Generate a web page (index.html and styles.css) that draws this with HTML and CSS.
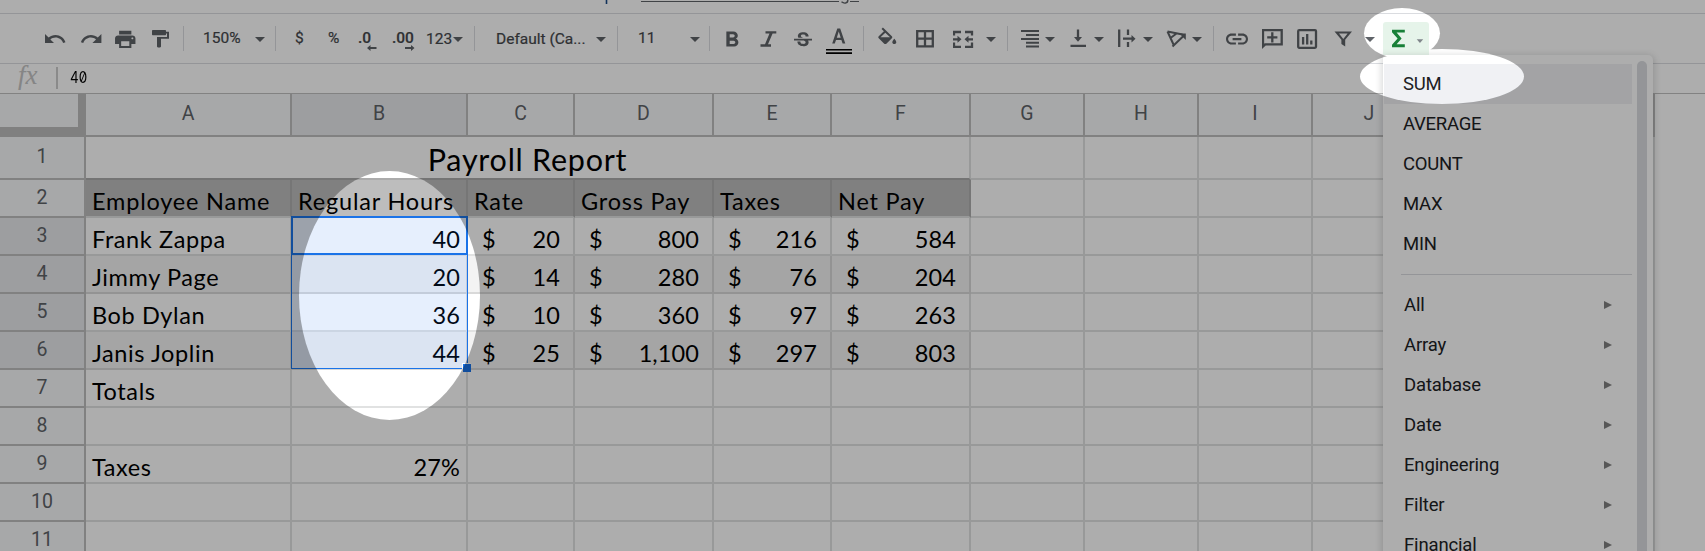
FILE: index.html
```html
<!DOCTYPE html>
<html lang="en">
<head>
<meta charset="utf-8">
<title>Payroll Report</title>
<link rel="stylesheet" href="styles.css">
</head>
<body>
<div class="app">
  <div class="menubar">
    <svg width="260" height="13" viewBox="600 0 260 13"><path d="M606.5 0v4" stroke="#1a4a86" stroke-width="1.6"/><path d="M641 1.5H839M850 1.5H859" stroke="#5f6368"/><path d="M841.5 1.8Q843.5 3.4 845.5 3Q848 2.4 847.8 0" fill="none" stroke="#5f6368" stroke-width="1.4"/></svg>
  </div>
  <div class="toolbar">
    <span></span>
    <svg width="21" height="30" viewBox="0 22 21 30"><path transform="translate(-2 27)" d="M12.5 8c-2.65 0-5.05.99-6.9 2.6L2 7v9h9l-3.62-3.62c1.39-1.16 3.16-1.88 5.12-1.88 3.54 0 6.55 2.31 7.6 5.5l2.37-.78C21.08 11.03 17.15 8 12.5 8z"/></svg>
    <svg width="21" height="30" viewBox="0 22 21 30"><path transform="translate(-1.6 27)" d="M18.4 10.6C16.55 8.99 14.15 8 11.5 8c-4.65 0-8.58 3.03-9.96 7.22L3.9 16c1.05-3.19 4.05-5.5 7.6-5.5 1.95 0 3.73.72 5.12 1.88L13 16h9V7l-3.6 3.6z"/></svg>
    <svg width="22" height="30" viewBox="0 22 22 30"><path transform="translate(-2 27.8) scale(1.02 .96)" d="M19 8H5c-1.66 0-3 1.34-3 3v6h4v4h12v-4h4v-6c0-1.66-1.34-3-3-3zm-3 11H8v-5h8v5zm3-7c-.55 0-1-.45-1-1s.45-1 1-1 1 .45 1 1-.45 1-1 1zm-1-9H6v4h12V3z"/></svg>
    <svg width="18" height="30" viewBox="0 22 18 30"><path transform="translate(-4 28.3) scale(1 .87)" d="M18 4V3c0-.55-.45-1-1-1H5c-.55 0-1 .45-1 1v4c0 .55.45 1 1 1h12c.55 0 1-.45 1-1V6h1v4H9v11c0 .55.45 1 1 1h2c.55 0 1-.45 1-1v-9h8V4h-3z"/></svg>
    <i class="sep"></i>
    <b class="t">150%</b>
    <i class="caret"></i>
    <i class="sep"></i>
    <b class="t">$</b>
    <b class="t">%</b>
    <b class="t num">.0<svg width="10" height="6" viewBox="0 0 10 6"><path d="M0 3L3.5 0V2H9.5V4H3.5V6z"/></svg></b>
    <b class="t num wide">.00<svg width="10" height="6" viewBox="0 0 10 6"><path d="M9.5 3L6 0V2H0V4H6V6z"/></svg></b>
    <b class="t low">123</b>
    <i class="caret"></i>
    <i class="sep"></i>
    <b class="t low">Default (Ca...</b>
    <i class="caret"></i>
    <i class="sep"></i>
    <b class="t">11</b>
    <i class="caret"></i>
    <i class="sep"></i>
    <svg width="14" height="30" viewBox="0 22 14 30"><path transform="translate(-7.5 27.3) scale(1.12 1.07)" d="M15.6 10.79c.97-.67 1.65-1.77 1.65-2.79 0-2.26-1.75-4-4-4H7v14h7.04c2.09 0 3.71-1.7 3.71-3.79 0-1.52-.86-2.82-2.15-3.42zM10 6.5h3c.83 0 1.5.67 1.5 1.5s-.67 1.5-1.5 1.5h-3v-3zm3.5 9H10v-3h3.5c.83 0 1.5.67 1.5 1.5s-.67 1.5-1.5 1.5z"/></svg>
    <svg width="17" height="30" viewBox="0 22 17 30"><path d="M5.5 31.3H16.3V33.6H12.6L8 44.3H11V46.7H.5V44.3H5L9.5 33.6H5.5z"/></svg>
    <svg width="18" height="30" viewBox="0 22 18 30"><path transform="translate(-3 29.4) scale(1 .93)" d="M7.24 8.75c-.26-.48-.39-1.03-.39-1.67 0-.61.13-1.16.4-1.67.26-.5.63-.93 1.11-1.29.48-.35 1.05-.63 1.7-.83.66-.19 1.39-.29 2.18-.29.81 0 1.54.11 2.21.34.66.22 1.23.54 1.69.94.47.4.83.88 1.08 1.43.25.55.38 1.15.38 1.81h-3.01c0-.31-.05-.59-.15-.85-.09-.27-.24-.49-.44-.68-.2-.19-.45-.33-.75-.44-.3-.1-.66-.16-1.06-.16-.39 0-.74.04-1.03.13-.29.09-.53.21-.72.36-.19.16-.34.34-.44.55-.1.21-.15.43-.15.66 0 .48.25.88.74 1.21.38.25.77.48 1.41.7H7.39c-.05-.08-.11-.17-.15-.25zM21 12v-2H3v2h9.62c.18.07.4.14.55.2.37.17.66.34.87.51.21.17.35.36.43.57.07.2.11.43.11.69 0 .23-.05.45-.14.66-.09.2-.23.38-.42.53-.19.15-.42.26-.71.35-.29.08-.63.13-1.01.13-.43 0-.83-.04-1.18-.13s-.66-.23-.91-.42c-.25-.19-.45-.44-.59-.75-.14-.31-.25-.76-.25-1.21H6.4c0 .55.08 1.13.24 1.58.16.45.37.85.65 1.21.28.35.6.66.98.92.37.26.78.48 1.22.65.44.17.9.3 1.38.39.48.08.96.13 1.44.13.8 0 1.53-.09 2.18-.28s1.21-.45 1.67-.79c.46-.34.82-.77 1.07-1.27s.38-1.07.38-1.71c0-.6-.1-1.14-.31-1.61-.05-.11-.11-.23-.17-.33H21z"/></svg>
    <svg width="26" height="33" viewBox="0 22 26 33"><path d="M11.3 28.5h2.9L19.3 43.5h-2.7l-1.2-3.6H10l-1.2 3.6H6.2zM10.8 37.7h3.9L12.75 31.6z"/><path d="M0 49h26v1.6H0zM0 52.2h26V54H0z" fill="#000"/></svg>
    <i class="sep"></i>
    <svg width="20" height="30" viewBox="0 22 20 30"><path transform="translate(-2.7 27.6) scale(1 .97)" d="M16.56 8.94L7.62 0 6.21 1.41l2.38 2.38-5.15 5.15c-.59.59-.59 1.54 0 2.12l5.5 5.5c.29.29.68.44 1.06.44s.77-.15 1.06-.44l5.5-5.5c.59-.58.59-1.53 0-2.12zM5.21 10L10 5.21 14.79 10H5.21zM19 11.5s-2 2.17-2 3.5c0 1.1.9 2 2 2s2-.9 2-2c0-1.33-2-3.5-2-3.5z"/></svg>
    <svg width="19" height="30" viewBox="0 22 19 30"><path class="ln" d="M1.2 31.2H16.8V46.3H1.2zM9 31V46M1 38.7H17"/></svg>
    <svg width="21" height="30" viewBox="0 22 21 30"><path class="ln" d="M1 35.5V32H8M12 32H19V35.5M1 42.5V46.8H8M12 46.8H19V42.5M0 39.3H6M20 39.3H14"/><path d="M4.5 35.8L8.5 39.3L4.5 42.8zM15.5 35.8L11.5 39.3L15.5 42.8z"/></svg>
    <i class="caret"></i>
    <i class="sep"></i>
    <svg width="18" height="30" viewBox="0 22 18 30"><path class="ln thin" d="M0 31H18M5 35H18M0 39H18M5 42.7H18M5 46.4H18"/></svg>
    <i class="caret"></i>
    <svg width="17" height="30" viewBox="0 22 17 30"><path class="ln" d="M8 29.5V38M.5 45.8H16"/><path d="M4 37H12L8 41.8z"/></svg>
    <i class="caret"></i>
    <svg width="18" height="30" viewBox="0 22 18 30"><path class="ln" d="M1.2 29.5V47M10 29.5V35M10 42V47M5 38.7H14"/><path d="M13.5 35L17.5 38.7L13.5 42.4z"/></svg>
    <i class="caret"></i>
    <svg width="21" height="30" viewBox="0 22 21 30"><path class="ln thin" d="M1.5 31.5L16.5 34.5M1.5 31.5L7.5 44.5M10.5 33.5L4.5 38M6.5 46.5L18 35.5"/><path d="M13.5 33.5H19.8V40z"/></svg>
    <i class="caret"></i>
    <i class="sep"></i>
    <svg width="22" height="30" viewBox="0 22 22 30"><path transform="translate(-2.2 25.9) scale(1.1)" d="M3.9 12c0-1.71 1.39-3.1 3.1-3.1h4V7H7c-2.76 0-5 2.24-5 5s2.24 5 5 5h4v-1.9H7c-1.71 0-3.1-1.39-3.1-3.1zM8 13h8v-2H8v2zm9-6h-4v1.9h4c1.71 0 3.1 1.39 3.1 3.1s-1.39 3.1-3.1 3.1h-4V17h4c2.76 0 5-2.24 5-5s-2.24-5-5-5z"/></svg>
    <svg width="21" height="30" viewBox="0 22 21 30"><path class="ln" d="M1 46.5V30.2H19.7V44.4H3.2z"/><path class="ln" d="M10.3 32.2V42.4M5.2 37.3H15.4"/></svg>
    <svg width="21" height="30" viewBox="0 22 21 30"><rect class="ln" x="1.2" y="30.2" width="17.8" height="17.6" rx="1"/><path class="ln" d="M6.1 37V44.5M10.2 34V44.5M14.3 40.5V44.5"/></svg>
    <svg width="19" height="30" viewBox="0 22 19 30"><path fill-rule="evenodd" d="M.5 31.5H18L11.2 39.8V46.5L7.4 44V39.8zM5 33.6L9.3 39L13.6 33.6z"/></svg>
    <i class="caret"></i>
    <span class="sigma"><svg width="46" height="33" viewBox="0 22 46 33"><path fill="#188038" d="M9 29.7H21.8V32.5H13.6L18.6 38.4L13.6 44.3H21.8V47.2H9V44.7L14.6 38.4L9 32.2z"/><path fill="#80868b" d="M33.7 39.2h6.5l-3.25 3.8z"/></svg></span>
  </div>
  <div class="formula"><span class="fx">fx</span><i class="bar"></i><span class="val">40</span></div>

  <div class="sheet">
    <div class="corner"></div><div class="ch">A</div><div class="ch on">B</div><div class="ch">C</div><div class="ch">D</div><div class="ch">E</div><div class="ch">F</div><div class="ch">G</div><div class="ch">H</div><div class="ch">I</div><div class="ch">J</div><div class="ch"></div><div class="ch last">L</div>

    <div class="rh first">1</div><div class="title">Payroll Report</div><i></i><i></i><i></i><i></i><i></i><i></i>

    <div class="rh">2</div><div class="h">Employee Name</div><div class="h">Regular Hours</div><div class="h">Rate</div><div class="h">Gross Pay</div><div class="h">Taxes</div><div class="h">Net Pay</div><i></i><i></i><i></i><i></i><i></i><i></i>

    <div class="rh on">3</div><div class="c">Frank Zappa</div><div class="c r">40</div><div class="c m"><b>$</b>20</div><div class="c m"><b>$</b>800</div><div class="c m"><b>$</b>216</div><div class="c m"><b>$</b>584</div><i></i><i></i><i></i><i></i><i></i><i></i>

    <div class="rh on">4</div><div class="c alt">Jimmy Page</div><div class="c r alt">20</div><div class="c m alt"><b>$</b>14</div><div class="c m alt"><b>$</b>280</div><div class="c m alt"><b>$</b>76</div><div class="c m alt"><b>$</b>204</div><i></i><i></i><i></i><i></i><i></i><i></i>

    <div class="rh on">5</div><div class="c">Bob Dylan</div><div class="c r">36</div><div class="c m"><b>$</b>10</div><div class="c m"><b>$</b>360</div><div class="c m"><b>$</b>97</div><div class="c m"><b>$</b>263</div><i></i><i></i><i></i><i></i><i></i><i></i>

    <div class="rh on">6</div><div class="c alt">Janis Joplin</div><div class="c r alt">44</div><div class="c m alt"><b>$</b>25</div><div class="c m alt"><b>$</b>1,100</div><div class="c m alt"><b>$</b>297</div><div class="c m alt"><b>$</b>803</div><i></i><i></i><i></i><i></i><i></i><i></i>

    <div class="rh">7</div><div class="c">Totals</div><i></i><i></i><i></i><i></i><i></i><i></i><i></i><i></i><i></i><i></i><i></i>

    <div class="rh">8</div><i></i><i></i><i></i><i></i><i></i><i></i><i></i><i></i><i></i><i></i><i></i><i></i>

    <div class="rh">9</div><div class="c">Taxes</div><div class="c r">27%</div><i></i><i></i><i></i><i></i><i></i><i></i><i></i><i></i><i></i><i></i>

    <div class="rh">10</div><i></i><i></i><i></i><i></i><i></i><i></i><i></i><i></i><i></i><i></i><i></i><i></i>

    <div class="rh">11</div><i></i><i></i><i></i><i></i><i></i><i></i><i></i><i></i><i></i><i></i><i></i><i></i>

    <div class="selection"><div class="active"></div><div class="handle"></div></div>
  </div>

  <div class="menu">
    <div class="items">
      <div class="mi hot">SUM</div><div class="mi">AVERAGE</div><div class="mi">COUNT</div><div class="mi">MAX</div><div class="mi">MIN</div>
      <hr>
      <div class="mi sub">All</div><div class="mi sub">Array</div><div class="mi sub">Database</div><div class="mi sub">Date</div><div class="mi sub">Engineering</div><div class="mi sub">Filter</div><div class="mi sub">Financial</div>
    </div>
    <div class="scroll"></div>
  </div>

  <svg class="dim" width="1705" height="551" viewBox="0 0 1705 551">
    <mask id="spots">
      <rect width="1705" height="551" fill="#fff"/>
      <ellipse cx="389.5" cy="295.5" rx="90.5" ry="124.5"/>
      <ellipse cx="1402" cy="33.2" rx="38" ry="25.2"/>
      <ellipse cx="1442" cy="76.5" rx="82" ry="27.5"/>
    </mask>
    <rect width="1705" height="551" fill="#000" fill-opacity=".32" mask="url(#spots)"/>
  </svg>
</div>
</body>
</html>
```
FILE: styles.css
```css
* { box-sizing: border-box; }
body { margin: 0; font-family: Roboto, "Liberation Sans", sans-serif; background: #fff; }
.app { position: relative; width: 1705px; height: 551px; overflow: hidden; background: #fff; }

.menubar { height: 14px; border-bottom: 1px solid #dadce0; padding-left: 600px; }
.menubar svg { display: block; }

/* one track per control; each control starts at the left edge of its track */
.toolbar {
  display: grid;
  grid-template-columns: 45px 36px 34px 37px 31px 20px 52px 20px 20px 33px 30px 34px 34px 27px 21px 22px 100px 21px 21px 52px 19px 17px 34px 34px 32px 37px 15px 38px 37px 33px 21px 14px 24px 25px 24px 24px 25px 23px 26px 21px 13px 36px 35px 37px 31px 18px 46px;
  align-items: start;
  height: 50px;
  padding-top: 8px;
  border-bottom: 1px solid #dadce0;
}
.toolbar svg { display: block; fill: #5f6368; }
.toolbar .ln { fill: none; stroke: #5f6368; stroke-width: 2.3; }
.toolbar .thin { stroke-width: 2; }
.sep { width: 1px; height: 25px; margin-top: 4px; background: #dadce0; }
.caret { width: 10px; height: 5px; margin-top: 15px; background: #5f6368; clip-path: polygon(0 0, 100% 0, 50% 100%); }
.t { font-size: 15.5px; font-weight: 400; line-height: 30px; margin-top: 1px; color: #45484c; white-space: nowrap; -webkit-text-stroke: .2px #45484c; }
.low { margin-top: 2px; }
.num { font-weight: 500; margin-top: 1px; }
.num svg { margin: -8px 0 0 9px; }
.wide svg { margin-left: 13px; }
.sigma { height: 33px; background: #e6f4ea; border-radius: 3px 3px 0 0; }

.formula { display: flex; height: 30px; border-bottom: 1px solid #c0c0c0; }
.fx { width: 56px; padding-left: 18px; font: italic 27px/22px "Liberation Serif", serif; color: #c4c4c4; }
.bar { width: 2px; height: 22px; margin-top: 3px; background: #ccc; }
.val { margin-left: 12px; font: 16px/27px Inter, sans-serif; font-feature-settings: "zero"; transform: scaleX(.84); transform-origin: 0 0; }

.sheet {
  position: relative;
  display: grid;
  width: 1769px;
  grid-template-columns: 86px 206px 176px 107px 139px 118px 139px repeat(6, 114px);
  grid-template-rows: 43px 43px repeat(10, 38px);
}
.sheet > i { border: solid #e1e2e2; border-width: 0 2px 2px 0; }
.corner { background: #f7f8fa; border: solid #bdbdbd; border-width: 0 8px 10px 0; }
.ch, .rh { display: flex; justify-content: center; background: #f7f8fa; border: solid #bfbfbf; border-width: 0 2px 2px 0; color: #5f6368; font-size: 19.5px; }
.ch { line-height: 39px; }
.last { padding-right: 3px; }
.rh { line-height: 35px; }
.rh.first { line-height: 39px; }
.ch.on, .rh.on { background: #e8e9ec; }
.title { grid-column: span 6; display: flex; justify-content: center; border: solid #e1e2e2; border-width: 0 2px 2px 0; border-bottom-color: #ababab; font: 30.5px/44px Lato, sans-serif; letter-spacing: .75px; }
.h, .c { font: 23.5px/43px Lato, sans-serif; border: solid #e1e2e2; border-width: 0 2px 2px 0; padding-left: 6px; color: #000; white-space: nowrap; letter-spacing: .6px; height: 38px; }
.h { background: #bdbdbd; border-right-color: #afafaf; letter-spacing: .8px; }
.c.alt { background: #f3f3f3; border-color: #d9d9d9; }
.c.r { text-align: right; padding-right: 6px; letter-spacing: .1px; }
.c.m { display: flex; justify-content: space-between; padding: 0 13px 0 14px; letter-spacing: .1px; }
.m b { font-weight: 400; }

.selection { grid-area: 4 / 3 / 8 / 4; position: absolute; inset: -2px 0 1px -1px; border: 1px solid #1a73e8; background: rgba(14, 101, 235, .1); }
.active { height: 39px; margin: -1px; border: 2px solid #1a73e8; }
.handle { position: absolute; right: -4px; bottom: -4px; width: 9px; height: 9px; background: #1a73e8; border: solid #fff; border-width: 1px 0 0 1px; }

.menu { position: absolute; left: 1383px; top: 55px; width: 270px; height: 520px; display: flex; justify-content: space-between; padding: 9px 6px 0 1px; background: #fff; border-radius: 0 5px 0 0; box-shadow: 0 2px 6px 2px rgba(60, 64, 67, .18); }
.items { width: 248px; }
.mi { height: 40px; padding-left: 19px; font-size: 18.5px; line-height: 40px; letter-spacing: -.25px; color: #202124; }
.hot { background: #f0f1f4; }
.items hr { height: 1px; margin: 10px 0 10px 17px; border: 0; background: #dadce0; }
.sub { display: flex; justify-content: space-between; align-items: center; padding: 0 20px 0 20px; letter-spacing: -.15px; }
.sub::after { content: ""; width: 8px; height: 8px; background: #808080; clip-path: polygon(0 0, 100% 50%, 0 100%); }
.scroll { width: 10px; margin-top: -3px; background: #dadce0; border-radius: 5px; }

.dim { position: absolute; inset: 0; pointer-events: none; }
```
